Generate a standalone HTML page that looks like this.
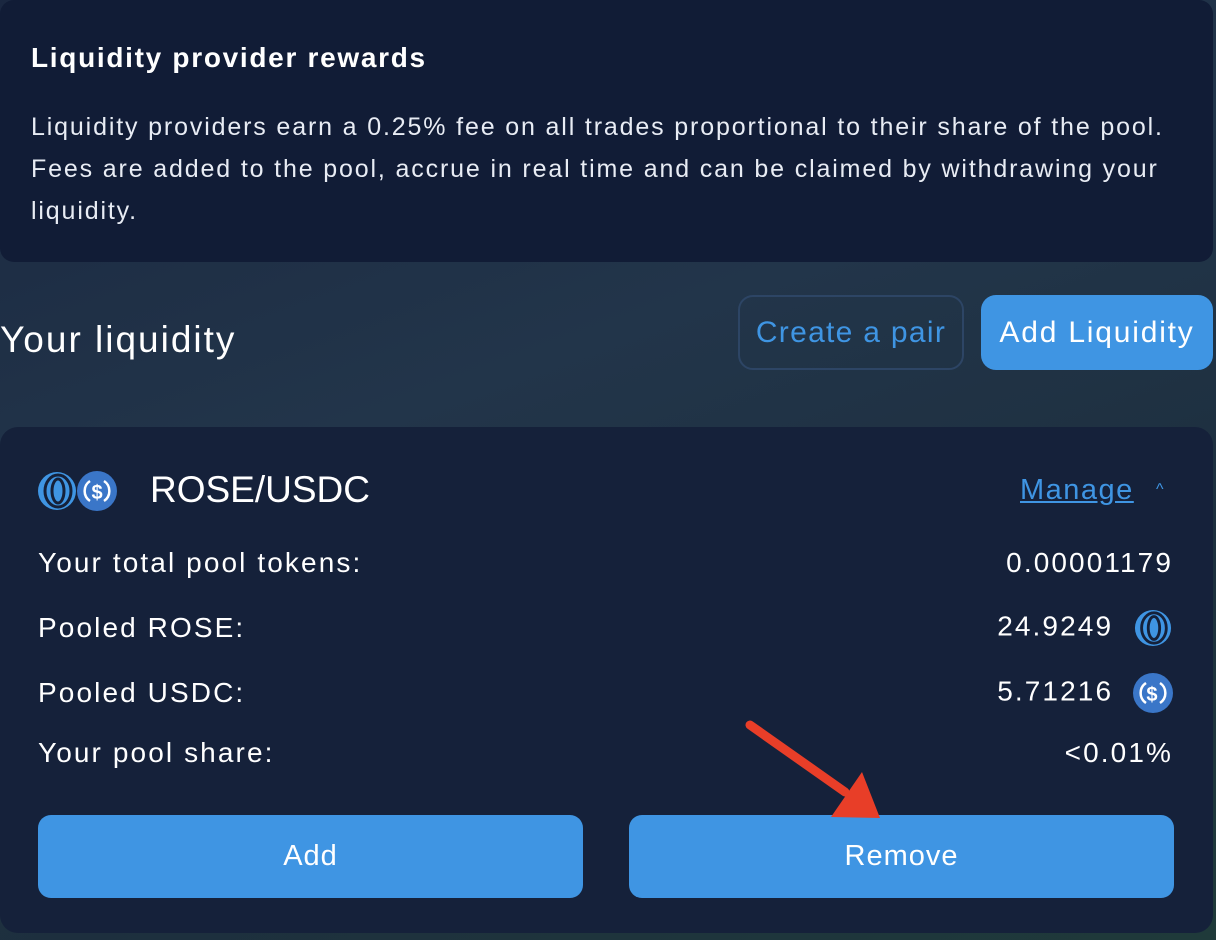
<!DOCTYPE html>
<html><head><meta charset="utf-8"><style>
*{margin:0;padding:0;box-sizing:border-box}
body{width:1216px;height:940px;overflow:hidden;font-family:"Liberation Sans",sans-serif;background:linear-gradient(160deg,#1a2740 0%,#22354a 40%,#1d2f3e 70%,#1f3a3a 100%);position:relative;color:#fff}
.top{position:absolute;left:0;top:0;width:1213px;height:262px;background:#111c36;border-radius:14px}
.top h2{position:absolute;left:31px;top:42px;font-size:28px;font-weight:bold;letter-spacing:1.7px;white-space:nowrap}
.top p{position:absolute;left:31px;top:106px;width:1180px;font-size:25px;line-height:42px;color:#e8ecf4;letter-spacing:1.85px;white-space:nowrap}
.yl{position:absolute;left:0;top:319px;font-size:37px;letter-spacing:2px}
.btn1{position:absolute;left:738px;top:295px;width:226px;height:75px;border:2px solid #2d4565;border-radius:15px;color:#3f95e3;font-size:30px;text-align:center;line-height:71px;letter-spacing:1.3px}
.btn2{position:absolute;left:981px;top:295px;width:232px;height:75px;background:#3f95e3;border-radius:15px;font-size:30px;text-align:center;line-height:75px;letter-spacing:1.8px}
.card{position:absolute;left:0;top:427px;width:1213px;height:506px;background:#15213a;border-radius:18px}
.row{position:absolute;left:38px;width:1135px;font-size:28px;display:flex;justify-content:space-between;align-items:center;letter-spacing:2.1px}
.b{position:absolute;top:388px;height:83px;width:545px;background:#3f95e3;border-radius:13px;font-size:29px;text-align:center;line-height:83px;letter-spacing:1px}
</style></head><body>
<div class="top"><h2>Liquidity provider rewards</h2>
<p>Liquidity providers earn a 0.25% fee on all trades proportional to their share of the pool.<br>Fees are added to the pool, accrue in real time and can be claimed by withdrawing your<br>liquidity.</p></div>
<div class="yl">Your liquidity</div>
<div class="btn1">Create a pair</div>
<div class="btn2">Add Liquidity</div>
<div class="card">
<svg style="position:absolute;left:37px;top:44px" width="84" height="42" viewBox="0 0 84 42">
<circle cx="20" cy="20" r="19" fill="#3f95e3"/><ellipse cx="21" cy="20" rx="13" ry="16" fill="none" stroke="#15213a" stroke-width="3"/><ellipse cx="21" cy="20" rx="6" ry="12" fill="none" stroke="#15213a" stroke-width="3"/>
<circle cx="60" cy="20" r="20" fill="#3a76c8"/><path d="M53 10 A12 12 0 0 0 53 30 M67 10 A12 12 0 0 1 67 30" stroke="#fff" stroke-width="2.5" fill="none"/><text x="60" y="28" font-size="20" font-weight="bold" fill="#fff" text-anchor="middle" font-family="Liberation Sans">$</text>
</svg>
<div style="position:absolute;left:150px;top:42px;font-size:37px">ROSE/USDC</div>
<div style="position:absolute;left:1020px;top:47px;font-size:29px;color:#3f95e3;text-decoration:underline;letter-spacing:1.5px">Manage</div>
<div style="position:absolute;left:1156px;top:54px;font-size:16px;color:#3f95e3">^</div>
<div class="row" style="top:120px"><span>Your total pool tokens:</span><span>0.00001179</span></div>
<div class="row" style="top:182px"><span>Pooled ROSE:</span><span>24.9249 <svg width="40" height="38" viewBox="0 0 40 40" style="vertical-align:middle;margin-left:10px"><circle cx="20" cy="20" r="19" fill="#3f95e3"/><ellipse cx="21" cy="20" rx="13" ry="16" fill="none" stroke="#15213a" stroke-width="3"/><ellipse cx="21" cy="20" rx="6" ry="12" fill="none" stroke="#15213a" stroke-width="3"/></svg></span></div>
<div class="row" style="top:246px"><span>Pooled USDC:</span><span>5.71216 <svg width="40" height="40" viewBox="0 0 40 40" style="vertical-align:middle;margin-left:10px"><circle cx="20" cy="20" r="20" fill="#3a76c8"/><path d="M13 10 A12 12 0 0 0 13 30 M27 10 A12 12 0 0 1 27 30" stroke="#fff" stroke-width="2.5" fill="none"/><text x="20" y="28" font-size="20" font-weight="bold" fill="#fff" text-anchor="middle" font-family="Liberation Sans">$</text></svg></span></div>
<div class="row" style="top:310px"><span>Your pool share:</span><span>&lt;0.01%</span></div>
<div class="b" style="left:38px">Add</div>
<div class="b" style="left:629px">Remove</div>
</div>
<svg style="position:absolute;left:0;top:0" width="1216" height="940"><path d="M750 725 L845 792" stroke="#e83e28" stroke-width="9" stroke-linecap="round"/><polygon points="862,772 880,818 831,817" fill="#e83e28"/></svg>
</body></html>
